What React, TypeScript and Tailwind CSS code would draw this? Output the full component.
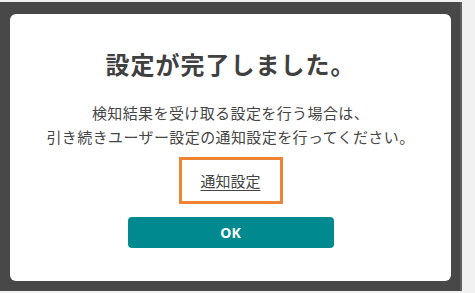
export default function App() {
  return (
    <div
      className="w-[475px] h-[293px] bg-[#f1f1f1] pt-[2px] overflow-hidden"
      style={{ fontFamily: '"Noto Sans", "Noto Sans CJK JP", sans-serif' }}
    >
      <div className="w-[462px] h-[289px] bg-[#484848] border-r-2 border-[#5e5e5e] pt-[12px] pl-[10px]">
        <div className="w-[441px] h-[267px] bg-white rounded-[6px] flex flex-col items-center pt-[35px] text-[#404040]">
          {/* タイトル */}
          <h1 className="text-[24px] leading-[32px] font-bold tracking-[1px]">設定が完了しました。</h1>
          <p className="mt-[20px] text-[15px] leading-[24px] text-center tracking-[0.4px] text-[#454545]">
            検知結果を受け取る設定を行う場合は、
            <br />
            引き続きユーザー設定の通知設定を行ってください。
          </p>
          <div className="mt-[8px] w-[104px] h-[47px] border-[3px] border-[#ee8434] flex items-center justify-center">
            <a href="#" className="text-[15px] leading-[20px] underline underline-offset-[3px] text-[#444]">
              通知設定
            </a>
          </div>
          <button className="mt-[13px] w-[206px] h-[31px] rounded-[4px] bg-[#008a90] text-white text-[14px] font-bold">
            OK
          </button>
        </div>
      </div>
    </div>
  )
}
